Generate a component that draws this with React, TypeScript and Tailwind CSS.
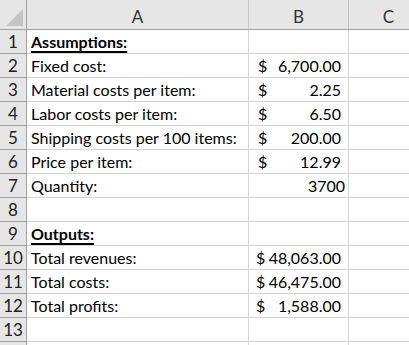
import React from "react";

type Row = { a: string; b?: React.ReactNode; bold?: boolean; hideNum?: boolean };

const Money = ({ v, tight }: { v: string; tight?: boolean }) => (
  <div className={`flex h-full items-center justify-between ${tight ? "pl-[7px]" : "pl-[9px]"} pr-[7px]`}>
    <span>$</span>
    <span>{v}</span>
  </div>
);

const rows: Row[] = [
  { a: "Assumptions:", bold: true },
  { a: "Fixed cost:", b: <Money v="6,700.00" /> },
  { a: "Material costs per item:", b: <Money v="2.25" /> },
  { a: "Labor costs per item:", b: <Money v="6.50" /> },
  { a: "Shipping costs per 100 items:", b: <Money v="200.00" /> },
  { a: "Price per item:", b: <Money v="12.99" /> },
  { a: "Quantity:", b: <div className="flex h-full items-center justify-end pr-[3px]">3700</div> },
  { a: "" },
  { a: "Outputs:", bold: true },
  { a: "Total revenues:", b: <Money v="48,063.00" tight /> },
  { a: "Total costs:", b: <Money v="46,475.00" tight /> },
  { a: "Total profits:", b: <Money v="1,588.00" tight /> },
  { a: "" },
  { a: "", hideNum: true },
];

export default function App() {
  return (
    <div
      className="w-[409px] h-[345px] overflow-hidden bg-white text-[16px] text-black"
      style={{ fontFamily: "Lato, 'Noto Sans', sans-serif" }}
    >
      {/* header */}
      <div className="flex h-[30px] border-b border-[#a0a0a0] bg-[#e6e6e6] text-[17px] text-[#333]">
        <div className="relative w-[27px] shrink-0 border-r border-[#a0a0a0]">
          <div
            className="absolute right-[3px] bottom-[3px] h-0 w-0"
            style={{ borderBottom: "17px solid #c4c4c4", borderLeft: "17px solid transparent" }}
          />
        </div>
        <div className="flex w-[222px] shrink-0 items-center justify-center border-r border-[#c8c8c8] pt-[5px]">A</div>
        <div className="flex w-[100px] shrink-0 items-center justify-center border-r border-[#c8c8c8] pt-[5px]">B</div>
        <div className="flex w-[80px] shrink-0 items-center justify-center border-r border-[#c8c8c8] pt-[5px]">C</div>
      </div>
      {rows.map((r, i) => (
        <div key={i} className="flex h-[24px]">
          <div className="flex w-[27px] shrink-0 items-center justify-center border-r border-b border-[#a0a0a0] bg-[#e6e6e6] pt-[1px] text-[17px] text-[#222]">
            {r.hideNum ? "" : i + 1}
          </div>
          <div
            className={`flex w-[222px] shrink-0 items-center border-r border-b border-[#d4d4d4] pl-[4px] pt-[1px] ${
              r.bold ? "font-bold underline decoration-[1.5px] underline-offset-[3px]" : ""
            }`}
          >
            {r.a}
          </div>
          <div className="w-[100px] shrink-0 border-r border-b border-[#d4d4d4] pt-[1px]">{r.b}</div>
          <div className="w-[80px] shrink-0 border-r border-b border-[#d4d4d4]" />
        </div>
      ))}
    </div>
  );
}
